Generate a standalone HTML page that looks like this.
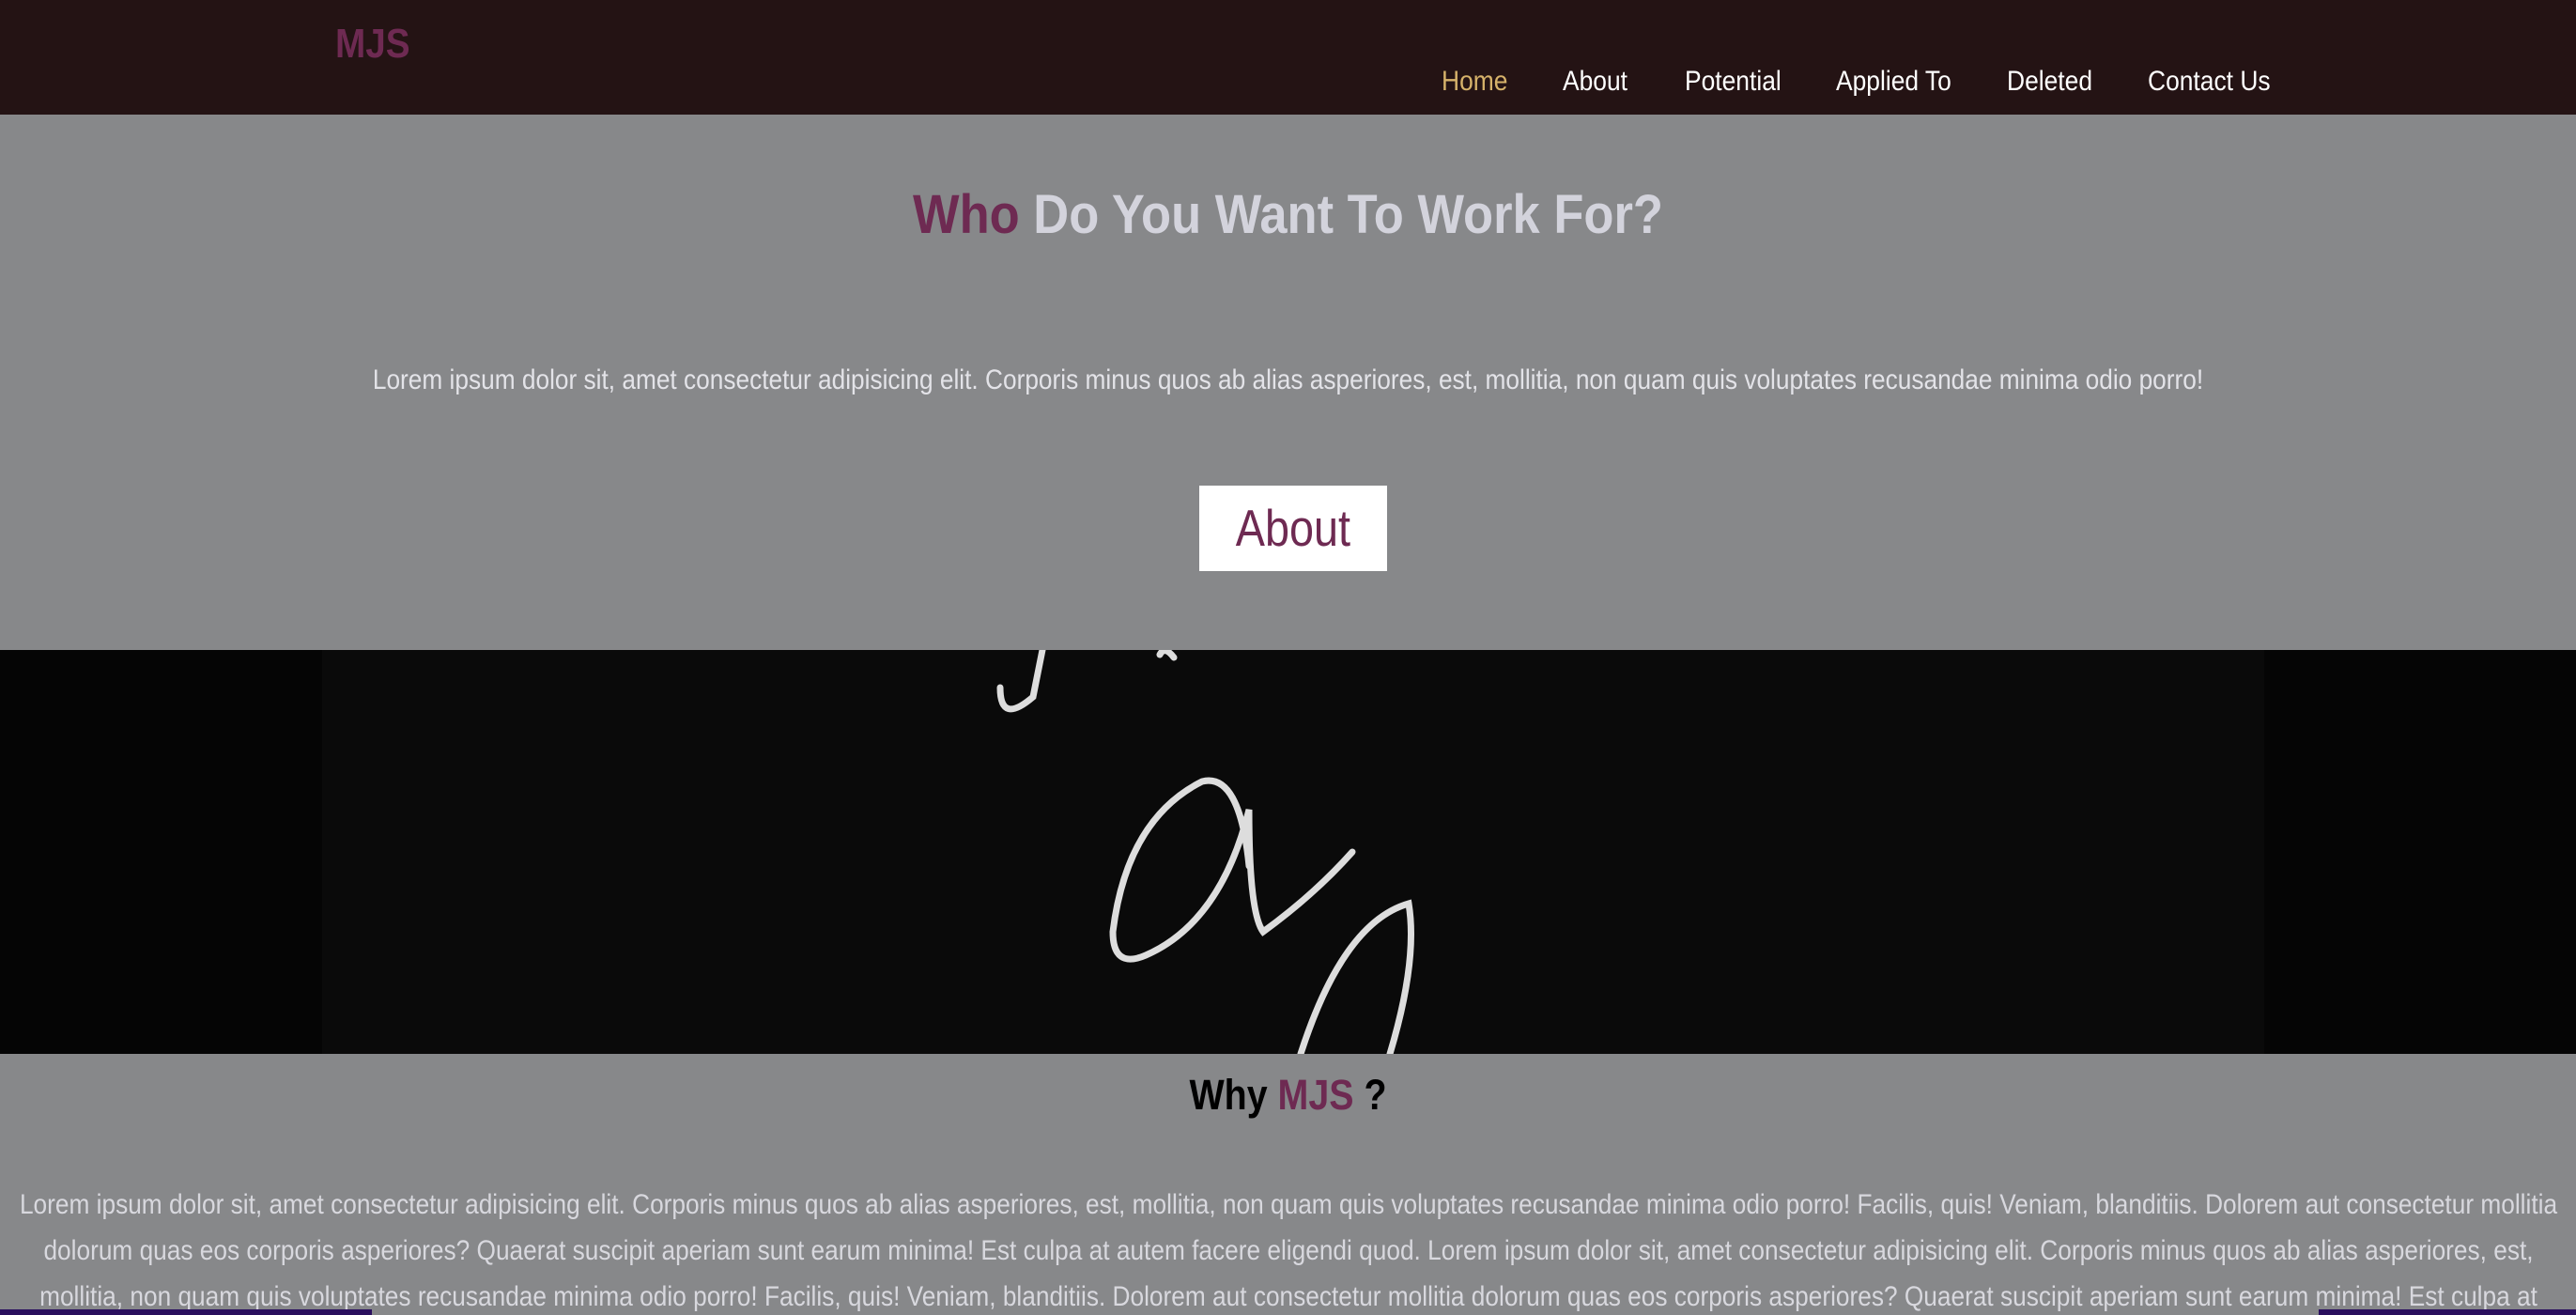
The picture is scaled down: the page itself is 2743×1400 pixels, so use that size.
<!DOCTYPE html>
<html style="width:2743px;height:1400px;overflow:hidden"><head><meta charset="utf-8"><style>
*{margin:0;padding:0;box-sizing:border-box}
body{width:2743px;height:1400px;overflow:hidden;background:#87888a;font-family:"Liberation Sans",sans-serif;position:relative}
.nav{position:absolute;left:0;top:0;width:2743px;height:122px;background:#241314}
.logo{position:absolute;left:357px;top:22px;font-size:44px;font-weight:bold;color:#6e2a52;transform:scaleX(.88);transform-origin:left}
.links{position:absolute;top:70px;font-size:30px;color:#fff}
.links span{position:absolute;white-space:nowrap;transform:scaleX(.88);transform-origin:left}
.hero{position:absolute;top:122px;left:0;width:2743px;height:570px;background:#87888a}
h1{position:absolute;width:100%;text-align:center;font-size:58px;font-weight:bold;color:#d3d3dc;transform:scaleX(.905)}
.p1{position:absolute;width:100%;text-align:center;font-size:30px;color:#e3e3e8;transform:scaleX(.875)}
.btn{position:absolute;left:1277px;width:200px;height:91px;background:#fff;color:#6e2a52;font-size:55px;text-align:center;line-height:91px}
.btn span{display:inline-block;transform:scaleX(.85)}
.img{position:absolute;top:692px;left:0;width:2743px;height:430px;background:#050505}
.why{position:absolute;top:1140px;width:100%;text-align:center;font-size:45px;font-weight:bold;color:#000;transform:scaleX(.875)}
.p2{position:absolute;top:1258px;left:-178px;width:3100px;text-align:center;font-size:30px;line-height:49px;color:#d8d8de;transform:scaleX(.875)}
.bar{position:absolute;top:1394px;height:6px;background:#2a0f5e}
</style></head><body>
<div class="nav">
<div class="logo">MJS</div>
<div class="links">
<span style="left:1535px;color:#d6b26a">Home</span>
<span style="left:1664px">About</span>
<span style="left:1794px">Potential</span>
<span style="left:1955px">Applied To</span>
<span style="left:2137px">Deleted</span>
<span style="left:2287px">Contact Us</span>
</div></div>
<div class="img">
<div style="position:absolute;left:343px;top:0;width:2068px;height:430px;background:#0a0a0a"></div>
<svg width="2743" height="430" style="position:absolute;left:0;top:0" fill="none" stroke="#ddd" stroke-width="7" stroke-linecap="round">
<path d="M1110 0 L1100 50 Q1065 80 1065 40"/>
<path d="M1235 5 Q1240 -5 1250 8"/>
<path d="M1330 230 Q1320 130 1280 140 Q1200 180 1185 300 Q1185 340 1220 325 Q1300 290 1330 170 Q1330 280 1345 300 Q1400 260 1440 215"/>
<path d="M1385 430 Q1430 290 1500 270 Q1510 330 1480 430"/>
</svg>
</div>
<div class="hero">
<h1 style="top:73px"><span style="color:#6e2a52">Who</span> Do You Want To Work For?</h1>
<div class="p1" style="top:266px">Lorem ipsum dolor sit, amet consectetur adipisicing elit. Corporis minus quos ab alias asperiores, est, mollitia, non quam quis voluptates recusandae minima odio porro!</div>
<div class="btn" style="top:395px"><span>About</span></div>
</div>
<div class="why">Why <span style="color:#6e2a52">MJS</span> ?</div>
<div class="p2">Lorem ipsum dolor sit, amet consectetur adipisicing elit. Corporis minus quos ab alias asperiores, est, mollitia, non quam quis voluptates recusandae minima odio porro! Facilis, quis! Veniam, blanditiis. Dolorem aut consectetur mollitia dolorum quas eos corporis asperiores? Quaerat suscipit aperiam sunt earum minima! Est culpa at autem facere eligendi quod. Lorem ipsum dolor sit, amet consectetur adipisicing elit. Corporis minus quos ab alias asperiores, est, mollitia, non quam quis voluptates recusandae minima odio porro! Facilis, quis! Veniam, blanditiis. Dolorem aut consectetur mollitia dolorum quas eos corporis asperiores? Quaerat suscipit aperiam sunt earum minima! Est culpa at autem facere eligendi quod.</div>
<div class="bar" style="left:0;width:396px"></div>
<div class="bar" style="left:2469px;width:274px"></div>
</body></html>
